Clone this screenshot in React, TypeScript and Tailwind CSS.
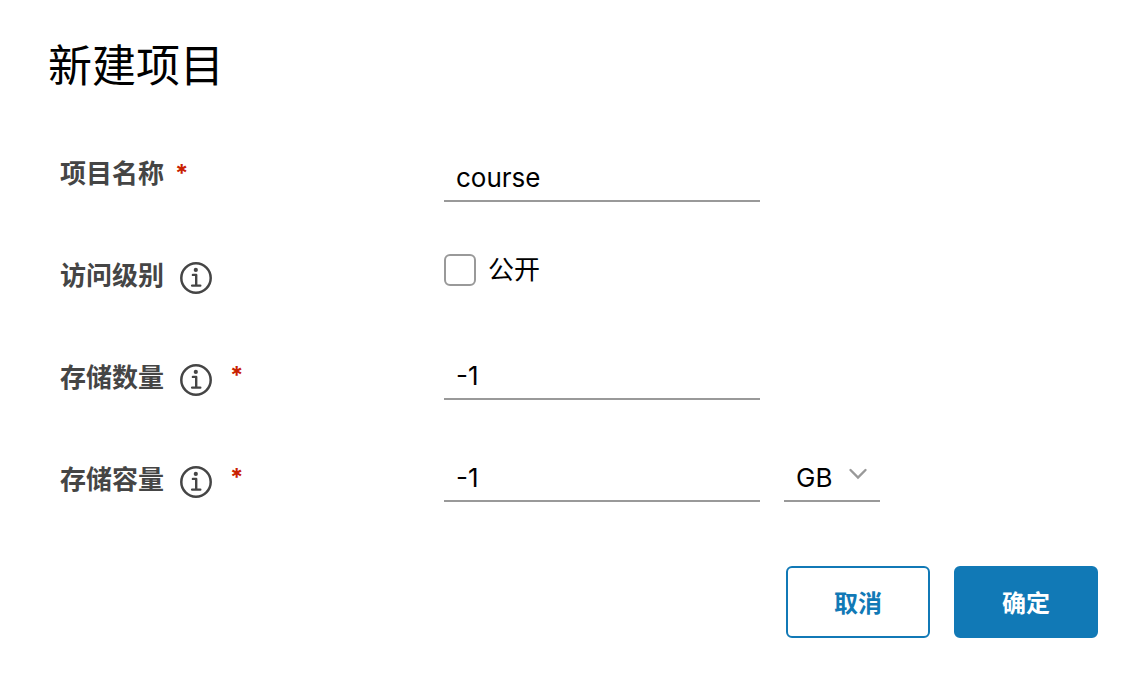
import { useState, type ReactNode } from 'react';

function InfoIcon() {
  return (
    <svg viewBox="0 0 32 32" className="size-8" fill="none" stroke="currentColor" strokeWidth="2.4" strokeLinecap="round" aria-hidden="true">
      <circle cx="16" cy="16" r="14.7" strokeWidth="2.5" />
      <circle cx="15.8" cy="7.9" r="2.1" fill="currentColor" stroke="none" />
      <path d="M12.9 12.9h3.3v10.6M12.1 23.6h8.2" strokeLinejoin="round" />
    </svg>
  );
}

function Required() {
  return <span className="text-2xl leading-10 font-bold text-[#c92100]">*</span>;
}

type RowProps = {
  label: string;
  htmlFor: string;
  info?: boolean;
  required?: boolean;
  controlClass?: string;
  children: ReactNode;
};

function Row({ label, htmlFor, info, required, controlClass = '', children }: RowProps) {
  return (
    <div className="flex h-[102px] items-start">
      <div className="flex w-96 shrink-0 items-start text-[#454545]">
        <label htmlFor={htmlFor} className="text-[26px] leading-[52px] font-bold">
          {label}
        </label>
        {info && (
          <button type="button" aria-label={label} className="mt-3 ml-4">
            <InfoIcon />
          </button>
        )}
        {required && (
          <span className={info ? 'pt-1 pl-[18px]' : 'pt-1.5 pl-[11px]'}>
            <Required />
          </span>
        )}
      </div>
      <div className={`flex items-start gap-6 ${controlClass}`}>{children}</div>
    </div>
  );
}

const field = 'h-12 border-b-2 border-[#999] bg-transparent pl-3 text-[26px] text-black outline-none';

export default function App() {
  const [name, setName] = useState('course');
  const [open, setOpen] = useState(false);
  const [count, setCount] = useState('-1');
  const [size, setSize] = useState('-1');
  const [unit, setUnit] = useState('GB');

  return (
    <main className="min-h-screen bg-white pt-10 pr-[42px] pb-11 pl-12 font-['Inter','Noto_Sans_CJK_SC',sans-serif] text-black">
      <h1 className="text-[44px] leading-[52px] font-normal">新建项目</h1>
      <form className="pt-14" onSubmit={(e) => e.preventDefault()}>
        <div className="pl-3">
          <Row label="项目名称" htmlFor="name" required controlClass="pt-1.5">
            <input id="name" className={`${field} w-[316px]`} value={name} onChange={(e) => setName(e.target.value)} />
          </Row>
          <Row label="访问级别" htmlFor="open" info controlClass="pt-1">
            <label className="flex items-center gap-3 text-[26px] leading-8">
              <input
                id="open"
                type="checkbox"
                className="size-8 appearance-none rounded-md border-2 border-[#999] checked:bg-[#1179b6]"
                checked={open}
                onChange={(e) => setOpen(e.target.checked)}
              />
              公开
            </label>
          </Row>
          <Row label="存储数量" htmlFor="count" info required>
            <input id="count" className={`${field} w-[316px]`} value={count} onChange={(e) => setCount(e.target.value)} />
          </Row>
          <Row label="存储容量" htmlFor="size" info required>
            <input id="size" className={`${field} w-[316px]`} value={size} onChange={(e) => setSize(e.target.value)} />
            <div className="relative">
              <select
                aria-label="单位"
                className={`${field} w-24 appearance-none`}
                value={unit}
                onChange={(e) => setUnit(e.target.value)}
              >
                <option>MB</option>
                <option>GB</option>
                <option>TB</option>
              </select>
              <svg
                viewBox="0 0 20 12"
                className="pointer-events-none absolute top-3.5 right-3 h-3 w-5"
                fill="none"
                stroke="#999"
                strokeWidth="2.4"
                strokeLinecap="round"
                aria-hidden="true"
              >
                <path d="M2.5 2l7.5 7.5 7.5-7.5" />
              </svg>
            </div>
          </Row>
        </div>
        <div className="flex justify-end gap-6 pt-2.5 text-2xl font-bold">
          <button type="button" className="h-[72px] w-36 rounded-md border-2 border-[#1179b6] bg-white pt-1 text-[#1179b6]">
            取消
          </button>
          <button type="submit" className="h-[72px] w-36 rounded-md border-2 border-[#1179b6] bg-[#1179b6] pt-1 text-white">
            确定
          </button>
        </div>
      </form>
    </main>
  );
}
